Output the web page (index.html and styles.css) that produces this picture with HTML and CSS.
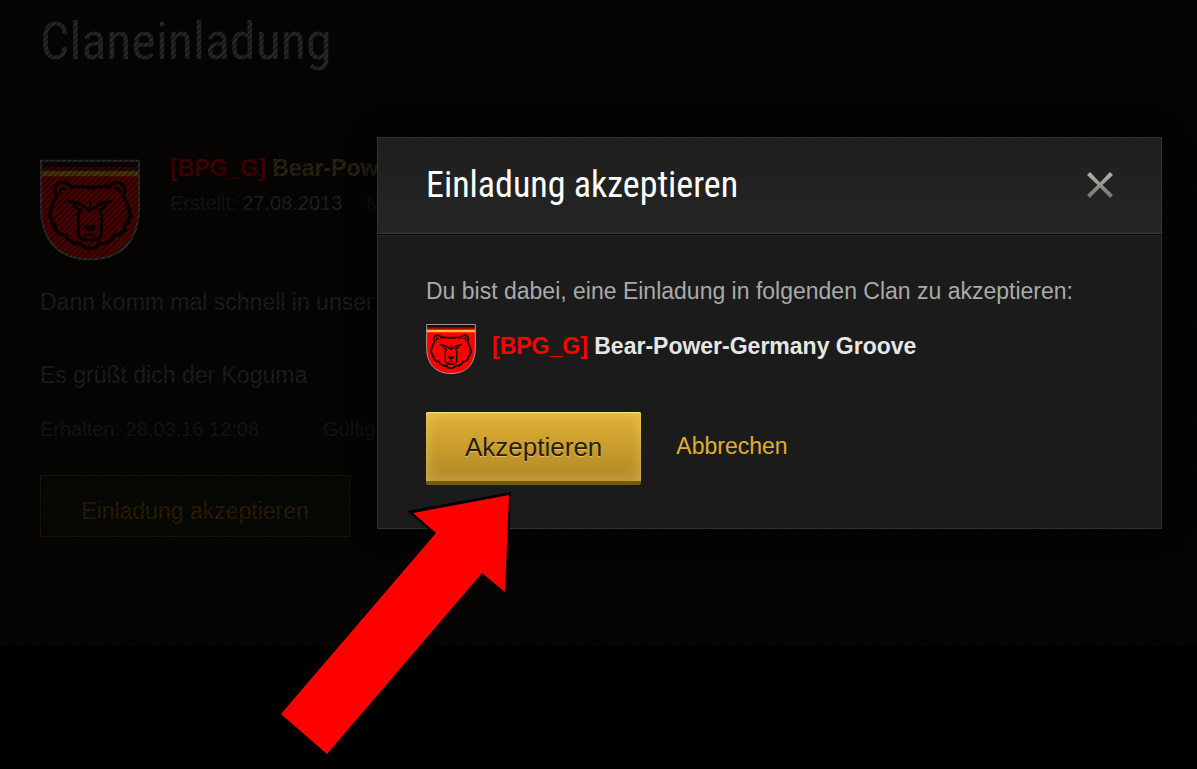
FILE: index.html
```html
<!DOCTYPE html>
<html lang="de">
<head>
<meta charset="utf-8">
<title>Claneinladung</title>
<link rel="stylesheet" href="styles.css">
</head>
<body>
<svg class="defs" aria-hidden="true">
  <symbol id="emblem" viewBox="30 29 300 302">
    <path fill="#f00" d="M32 32H328V170C328 270 275 328 180 328S32 270 32 170Z"/>
    <path fill="#161010" d="M32 32H328V52H32Z"/>
    <path fill="#a80808" d="M32 52H328V63H32Z"/>
    <path fill="#fb2" d="M32 63H328V79H32Z"/>
    <path fill="none" stroke="#999" stroke-width="6" d="M33 32H327V170C327 270 275 328 180 328S33 270 33 170Z"/>
    <g fill="none" stroke="#180000" stroke-width="11" stroke-linejoin="round">
      <path d="M180 112C162 114 142 106 121 111C114 95 94 93 83 103C73 113 75 129 80 139C67 156 62 178 58 200L67 208L64 217L76 226L75 239L91 253L107 255L112 267L134 281L151 281L163 293L180 296L197 293L209 281L226 281L248 267L253 255L269 253L285 239L284 226L296 217L293 208L302 200C298 178 293 156 280 139C285 129 287 113 277 103C266 93 246 95 239 111C218 106 198 114 180 112Z"/>
      <path d="M90 133C88 117 97 111 107 118M270 133C272 117 263 111 253 118" stroke-width="8"/>
      <path d="M113 153L145 160L180 182L215 160L247 153M130 163Q142 180 152 180L144 196L146 232L145 254L158 270H202L215 254L214 232L216 196L208 180Q218 180 230 163" stroke-width="9"/>
      <path d="M180 153V174M163 261L171 254H189L197 261" stroke-width="6"/>
      <path fill="#180000" d="M165 226L180 230L195 226L193 235L180 242L167 235Z" stroke-width="5"/>
    </g>
  </symbol>
</svg>

<main class="page">
  <h1 class="page-title">Claneinladung</h1>
  <section class="clan">
    <svg class="clan-emblem" aria-hidden="true"><use href="#emblem"/></svg>
    <div class="clan-info">
      <h2 class="clan-name"><span class="tag">[BPG_G]</span> Bear-Pow</h2>
      <p class="meta"><span>Erstellt: <span class="date">27.08.2013</span></span><span>M</span></p>
    </div>
  </section>
  <p class="message">Dann komm mal schnell in unser</p>
  <p class="message">Es grüßt dich der Koguma</p>
  <p class="times"><span>Erhalten: 28.03.16 12:08</span><span>Gültig</span></p>
  <button class="page-button" type="button">Einladung akzeptieren</button>
</main>
<div class="shade"></div>

<div class="dialog" role="dialog" aria-labelledby="dialog-title">
  <header class="dialog-header">
    <h2 class="dialog-title" id="dialog-title">Einladung akzeptieren</h2>
    <button class="close" type="button" aria-label="Schließen">
      <svg viewBox="0 0 26 26" aria-hidden="true">
        <defs><linearGradient id="steel" x2="0" y2="1"><stop stop-color="#b5b5aa"/><stop offset="1" stop-color="#73736c"/></linearGradient></defs>
        <path fill="url(#steel)" d="M3 0L13 10.500L23 0L26 3L15.500 13L26 23L23 26L13 15.500L3 26L0 23L10.500 13L0 3Z"/>
      </svg>
    </button>
  </header>
  <div class="dialog-body">
    <p class="lead">Du bist dabei, eine Einladung in folgenden Clan zu akzeptieren:</p>
    <p class="target">
      <svg class="target-emblem" aria-hidden="true"><use href="#emblem"/></svg>
      <strong><span class="tag">[BPG_G]</span> Bear-Power-Germany Groove</strong>
    </p>
    <div class="actions">
      <button class="accept" type="button">Akzeptieren</button>
      <a class="cancel" href="#">Abbrechen</a>
    </div>
  </div>
</div>

<svg class="arrow" viewBox="0 0 236 266" aria-hidden="true">
  <path d="M127 21L231 2L227 105L202 84L47 264L1 224L153 43Z"/>
  <path fill="#f00" d="M1 224L156 43L133 23L229 5L225 102L202 83L47 264Z"/>
</svg>
</body>
</html>
```
FILE: styles.css
```css
* { box-sizing: border-box; }
body {
  margin: 0;
  min-height: 100vh;
  background: #000;
  color: #1e1f20;
  font: 23px/32px "Liberation Sans", Arial, sans-serif;
  overflow: hidden;
}
h1, h2, p { margin: 0; }
button { font: inherit; cursor: pointer; }
.defs { position: absolute; width: 0; height: 0; }

.page {
  min-height: 646px;
  padding: 12px 40px 0;
  background: #060503;
}
.page-title {
  font: 52px/60px "Liberation Sans Narrow", "Roboto Condensed", "Arial Narrow", sans-serif;
  color: #272727;
}
.clan { display: flex; gap: 30px; margin: 87px 0 25px; }
.clan-emblem { width: 100px; height: 102px; opacity: .26; }
.clan-name { font-size: 23px; line-height: 18px; color: #2c2512; }
.clan-name .tag { color: #460000; }
.meta { display: flex; gap: 24px; margin-top: 10px; font-size: 20px; color: #151617; }
.date { color: #212223; }
.message { margin-bottom: 41px; }
.times { display: flex; gap: 64px; margin: -19px 0 30px; font-size: 20px; color: #151617; }
.page-button {
  min-width: 310px;
  min-height: 62px;
  padding: 10px 38px 0;
  border: 1px solid #1c1705;
  background: #080803;
  color: #2c1f04;
}
.shade {
  position: absolute;
  inset: 0 0 auto;
  height: 646px;
  background: repeating-linear-gradient(135deg, rgba(0,0,0,.35) 0 2px, transparent 2px 4px);
}

.dialog {
  position: absolute;
  top: 137px;
  left: 377px;
  right: 35px;
  color: #aaa;
  box-shadow: 0 0 24px rgba(0,0,0,.8);
}
.dialog-header {
  display: flex;
  align-items: center;
  justify-content: space-between;
  min-height: 97px;
  padding: 0 48px 2px;
  border: 1px solid #343434;
  border-bottom-color: #3a3a3a;
  background: linear-gradient(#1e1e1e, #252525);
}
.dialog-title {
  font: 36px/48px "Liberation Sans Narrow", "Roboto Condensed", "Arial Narrow", sans-serif;
  color: #fff;
}
.close { display: flex; padding: 0; border: 0; background: none; }
.close svg { width: 26px; height: 26px; }
.dialog-body {
  margin-top: 1px;
  padding: 39px 48px 43px;
  border: 1px solid #303030;
  border-top-color: #262626;
  background: #1b1b1b;
}
.target { display: flex; gap: 16px; margin: 17px 0 38px; color: #e6e6e6; line-height: 44px; }
.target-emblem { width: 50px; height: 50px; }
.tag { color: #f00; }
.actions { display: flex; gap: 35px; line-height: 68px; }
.accept {
  min-height: 73px;
  padding: 0 39px;
  border: 0;
  border-bottom: 4px solid #735817;
  border-radius: 2px;
  background: linear-gradient(#e2b235, #b08727);
  box-shadow: inset 0 0 14px rgba(255,225,130,.45), inset 0 1px 1px #ffe36a;
  color: #26200c;
  font-size: 26px;
  text-shadow: 0 1px 1px #e6c26a;
}
.cancel { color: #e0ad32; text-decoration: none; }

.arrow { position: absolute; top: 490px; left: 280px; width: 236px; height: 266px; }
```
